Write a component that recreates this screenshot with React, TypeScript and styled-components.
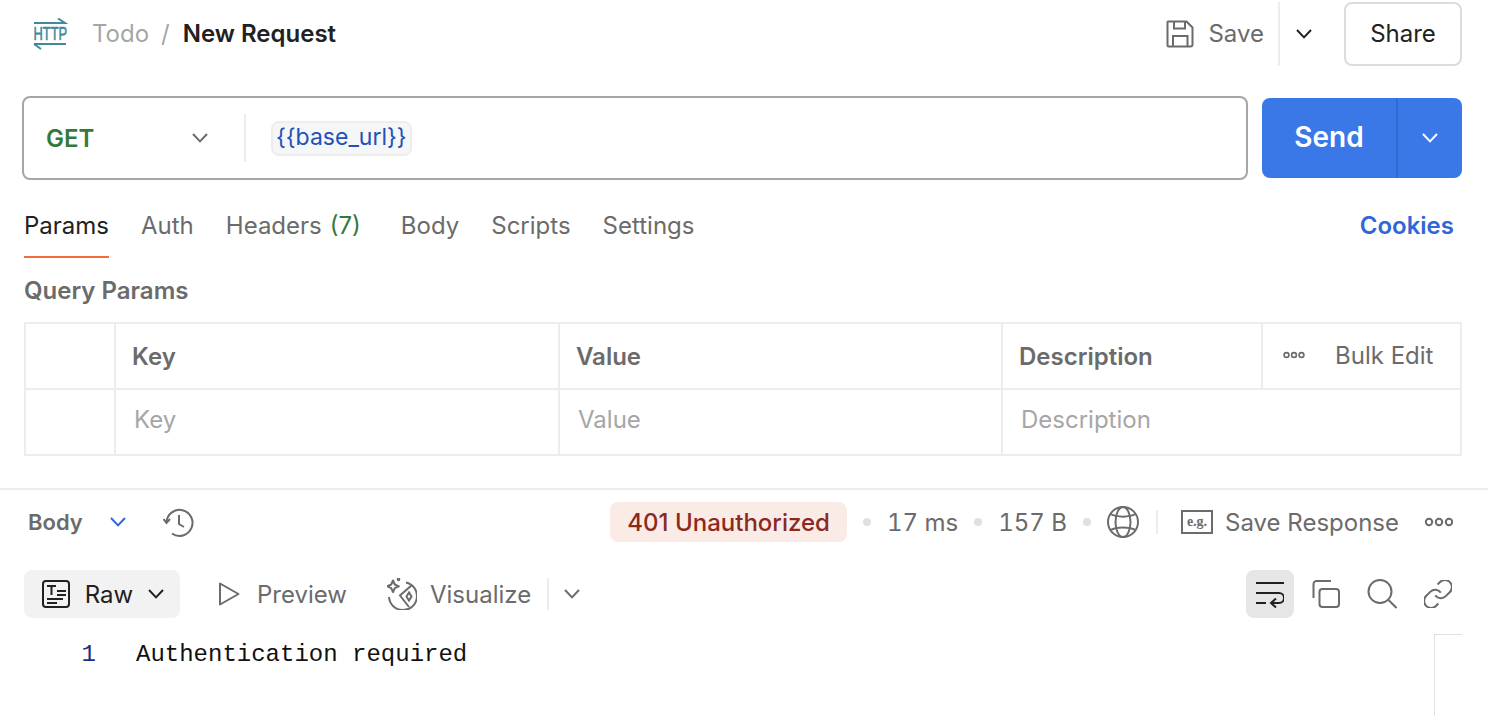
import React from "react";
import styled, { createGlobalStyle } from "styled-components";

const GlobalStyle = createGlobalStyle`
  html, body { margin: 0; padding: 0; background: #fff; }
  body { font-family: Inter, "Liberation Sans", sans-serif; color: #212121; overflow: hidden; }
`;

const Page = styled.div`
  width: 1488px;
  height: 716px;
  display: flex;
  flex-direction: column;
  overflow: hidden;
`;

const Header = styled.div`
  height: 64px;
  margin-top: 2px;
  padding: 0 26px 0 32px;
  display: flex;
  align-items: center;
`;

const Crumbs = styled.div`
  display: flex;
  align-items: center;
  margin-left: 24px;
  padding-bottom: 1px;
  font-size: 24px;
  flex: 1;
`;

const CrumbParent = styled.span`
  color: #a6a6a6;
`;

const CrumbSlash = styled.span`
  color: #a6a6a6;
  margin: 0 13px 0 12px;
`;

const CrumbName = styled.span`
  font-weight: 600;
  color: #212121;
`;

const SaveText = styled.span`
  font-size: 24px;
  color: #6b6b6b;
  margin-left: 14px;
  margin-right: 14px;
  padding-bottom: 1px;
`;

const VerticalRule = styled.div<{ $h: number }>`
  width: 2px;
  height: ${(p) => p.$h}px;
  background: #ededed;
  flex: none;
`;

const SaveChevron = styled.div`
  display: flex;
  margin-left: 16px;
  margin-right: 32px;
`;

const ShareButton = styled.div`
  width: 118px;
  height: 64px;
  box-sizing: border-box;
  border: 2px solid #dcdcdc;
  border-radius: 8px;
  padding-bottom: 1px;
  display: flex;
  align-items: center;
  justify-content: center;
  font-size: 24px;
  color: #212121;
`;

const UrlRow = styled.div`
  margin-top: 30px;
  padding: 0 26px 0 22px;
  display: flex;
  align-items: center;
  gap: 14px;
`;

const UrlBar = styled.div`
  flex: 1;
  height: 84px;
  box-sizing: border-box;
  border: 2px solid #a6a6a6;
  border-radius: 8px;
  display: flex;
  align-items: center;
`;

const Method = styled.div`
  width: 220px;
  box-sizing: border-box;
  padding: 0 36px 0 22px;
  display: flex;
  align-items: center;
  justify-content: space-between;
  font-size: 24px;
  font-weight: 600;
  color: #35793a;
`;

const VarChip = styled.span`
  margin-left: 25px;
  height: 35px;
  box-sizing: border-box;
  padding: 0 3px 2px;
  display: flex;
  align-items: center;
  background: #f5f6f8;
  border: 2px solid #ededed;
  border-radius: 8px;
  font-size: 23px;
  color: #2251b5;
`;

const SendButton = styled.div`
  width: 200px;
  height: 80px;
  border-radius: 8px;
  background: #3b78e7;
  display: flex;
  color: #fff;
`;

const SendLabel = styled.div`
  width: 134px;
  padding-bottom: 2px;
  display: flex;
  align-items: center;
  justify-content: center;
  font-size: 28px;
  font-weight: 600;
  border-right: 2px solid #336bd0;
`;

const SendChevron = styled.div`
  flex: 1;
  display: flex;
  align-items: center;
  justify-content: center;
`;

const TabRow = styled.div`
  margin-top: 16px;
  height: 62px;
  padding: 0 34px 0 24px;
  display: flex;
  gap: 32px;
`;

const Tab = styled.div<{ $active?: boolean }>`
  height: 62px;
  box-sizing: border-box;
  padding-top: 14px;
  font-size: 24px;
  line-height: 32px;
  color: ${(p) => (p.$active ? "#212121" : "#6b6b6b")};
  border-bottom: 2px solid ${(p) => (p.$active ? "#f26b3a" : "transparent")};
`;

const TabCount = styled.span`
  color: #35793a;
  margin-left: 8px;
  margin-right: 8px;
`;

const CookiesLink = styled.div`
  margin-left: auto;
  padding-top: 14px;
  font-size: 24px;
  line-height: 32px;
  font-weight: 600;
  color: #2f66d8;
`;

const SectionTitle = styled.div`
  margin-top: 18px;
  padding-left: 24px;
  font-size: 24px;
  line-height: 30px;
  font-weight: 600;
  color: #6b6b6b;
`;

const ParamsTable = styled.div`
  margin: 16px 26px 0 24px;
  height: 134px;
  box-sizing: border-box;
  border: 2px solid #ededed;
  display: grid;
  grid-template-columns: 88px 444px 443px 260px 1fr;
  grid-template-rows: 66px 64px;
`;

const Cell = styled.div<{ $head?: boolean; $span?: number; $first?: boolean }>`
  box-sizing: border-box;
  display: flex;
  align-items: center;
  padding-left: ${(p) => (p.$head ? 16 : 18)}px;
  padding-bottom: ${(p) => (p.$head ? 0 : 6)}px;
  grid-column: span ${(p) => p.$span ?? 1};
  border-left: ${(p) => (p.$first ? "none" : "2px solid #ededed")};
  border-bottom: ${(p) => (p.$head ? "2px solid #ededed" : "none")};
  font-size: 24px;
  font-weight: ${(p) => (p.$head ? 600 : 400)};
  color: ${(p) => (p.$head ? "#6b6b6b" : "#a6a6a6")};
`;

const BulkCell = styled(Cell)`
  padding-left: 20px;
  padding-bottom: 2px;
  gap: 30px;
  font-weight: 400;
`;

const ResponseBar = styled.div`
  margin-top: 32px;
  height: 66px;
  box-sizing: border-box;
  border-top: 2px solid #ededed;
  padding: 0 35px 0 28px;
  display: flex;
  align-items: center;
`;

const BodyLabel = styled.span`
  font-size: 22px;
  font-weight: 600;
  color: #6b6b6b;
`;

const BodyChevron = styled.div`
  display: flex;
  margin-left: 27px;
  margin-right: 37px;
`;

const StatusBadge = styled.div`
  margin-left: auto;
  height: 40px;
  padding: 0 17px;
  border-radius: 8px;
  background: #fbebe7;
  color: #8b2a1c;
  font-size: 24px;
  font-weight: 500;
  display: flex;
  align-items: center;
`;

const Dot = styled.span`
  width: 8px;
  height: 8px;
  border-radius: 50%;
  background: #e0e0e0;
  margin: 0 16px;
  flex: none;
`;

const Meta = styled.span`
  font-size: 24px;
  color: #6b6b6b;
  font-variant-numeric: tabular-nums;
`;

const ResponseAction = styled.span`
  font-size: 24px;
  color: #6b6b6b;
  margin-left: 12px;
  margin-right: 26px;
`;

const ToolRow = styled.div`
  margin-top: 16px;
  height: 48px;
  padding: 0 36px 0 24px;
  display: flex;
  align-items: center;
`;

const RawPill = styled.div`
  width: 156px;
  height: 48px;
  box-sizing: border-box;
  padding: 0 16px 0 18px;
  border-radius: 8px;
  background: #f2f2f2;
  display: flex;
  align-items: center;
  font-size: 24px;
  color: #212121;
  justify-content: space-between;
`;

const ToolItem = styled.div<{ $gap: number; $left: number }>`
  display: flex;
  align-items: center;
  gap: ${(p) => p.$gap}px;
  margin-left: ${(p) => p.$left}px;
  font-size: 24px;
  color: #6b6b6b;
`;

const ToolIcons = styled.div`
  margin-left: auto;
  display: flex;
  align-items: center;
`;

const WrapButton = styled.div`
  width: 48px;
  height: 48px;
  border-radius: 8px;
  background: #e6e6e6;
  display: flex;
  align-items: center;
  justify-content: center;
`;

const CodeArea = styled.div`
  margin-top: 16px;
  flex: 1;
  padding-right: 26px;
  display: flex;
  font-family: "Liberation Mono", monospace;
  font-size: 24px;
`;

const LineNumber = styled.div`
  width: 96px;
  padding-top: 2px;
  text-align: right;
  line-height: 38px;
  color: #1c2f7f;
`;

const CodeText = styled.div`
  flex: 1;
  margin-left: 40px;
  padding-top: 2px;
  line-height: 38px;
  color: #111;
`;

const Minimap = styled.div`
  width: 28px;
  box-sizing: border-box;
  border-left: 1px solid #e0e0e0;
  border-top: 1px solid #e0e0e0;
`;

const IconSlot = styled.div<{ $left: number }>`
  display: flex;
  margin-left: ${(p) => p.$left}px;
`;

const Chevron = ({ size = 16, color = "#212121", w = 2 }: { size?: number; color?: string; w?: number }) => (
  <svg width={size} height={size * 0.6} viewBox="0 0 16 9.6" fill="none">
    <path d="M1 1l7 7.4L15 1" stroke={color} strokeWidth={w} />
  </svg>
);

const HttpLogo = () => (
  <svg width="36" height="32" viewBox="0 0 36 32" fill="none" style={{ flex: "none" }}>
    <path d="M2 5h31L26 .5M2 26h32M2 26l7 5" stroke="#43899b" strokeWidth="2" />
    <text transform="translate(1.500 22) scale(.68 1)" fontFamily="Liberation Sans" fontSize="19" fill="#43899b" stroke="#43899b" strokeWidth=".6">HTTP</text>
  </svg>
);

const SaveIcon = () => (
  <svg width="28" height="28" viewBox="0 0 28 28" fill="none" stroke="#6b6b6b" strokeWidth="2" style={{ flex: "none" }}>
    <path d="M2 1.500h18.500l6 6v17a2 2 0 0 1-2 2H2.500a1 1 0 0 1-1-1V2a.5.5 0 0 1 .5-.5z" strokeLinejoin="round" />
    <path d="M8 1.500v7h11v-7M7 26.500V16h14.500v10.500" />
  </svg>
);

const HistoryIcon = () => (
  <svg width="32" height="30" viewBox="0 0 32 30" fill="none" stroke="#6b6b6b" strokeWidth="2">
    <path d="M3.500 15.500A13 13 0 1 1 9 26.500" />
    <path d="M.5 12l3 4 3.500-4M16 8v9l5 3" />
  </svg>
);

const GlobeIcon = () => (
  <svg width="32" height="32" viewBox="0 0 32 32" fill="none" stroke="#6b6b6b" strokeWidth="2" style={{ flex: "none" }}>
    <circle cx="16" cy="16" r="15" />
    <ellipse cx="16" cy="16" rx="7.500" ry="15" />
    <path d="M3.500 8c6 3.500 19 3.500 25 0M3.500 24c6-3.500 19-3.500 25 0" />
  </svg>
);

const ExampleIcon = () => (
  <svg width="32" height="24" viewBox="0 0 32 24" fill="none" style={{ flex: "none" }}>
    <rect x="1" y="1" width="30" height="22" fill="none" stroke="#6b6b6b" strokeWidth="2" />
    <text x="16" y="16" textAnchor="middle" fontFamily="Liberation Serif" fontWeight="700" fontSize="14" fill="#6b6b6b">e.g.</text>
  </svg>
);

const MoreDots = ({ r = 3.2 }: { r?: number }) => (
  <svg width="28" height="10" viewBox="0 0 28 10" fill="none" stroke="#6b6b6b" strokeWidth="2" style={{ flex: "none" }}>
    <circle cx="4" cy="5" r={r} />
    <circle cx="14" cy="5" r={r} />
    <circle cx="24" cy="5" r={r} />
  </svg>
);

const SmallDots = () => (
  <svg width="22" height="8" viewBox="0 0 22 8" fill="none" stroke="#6b6b6b" strokeWidth="1.600">
    <circle cx="3.500" cy="4" r="2.400" />
    <circle cx="11" cy="4" r="2.400" />
    <circle cx="18.500" cy="4" r="2.400" />
  </svg>
);

const RawIcon = () => (
  <svg width="28" height="28" viewBox="0 0 28 28" fill="none" stroke="#212121" strokeWidth="2">
    <rect x="1" y="1" width="26" height="26" rx="3" />
    <path d="M5 6h9M9.500 6v9M15 11h9M15 15h9M5 19h16M5 23h10" />
  </svg>
);

const PlayIcon = () => (
  <svg width="22" height="24" viewBox="0 0 22 24" fill="none" stroke="#6b6b6b" strokeWidth="2">
    <path d="M2 1.500v21L20.500 12z" strokeLinejoin="round" />
  </svg>
);

const VisualizeIcon = () => (
  <svg width="30" height="32" viewBox="0 0 30 32" fill="none" stroke="#6b6b6b" strokeWidth="2">
    <path d="M19 4.400A14 14 0 1 1 2 19" />
    <path d="M25 7L13 17.500 22 29M22 14.500l-2.500 4 2.500 4 2.500-4z" />
    <path d="M6 2.500l1.800 4 4 1.800-4 1.800-1.800 4-1.800-4-4-1.800 4-1.800z" strokeLinejoin="round" />
    <circle cx="11.500" cy="1.500" r=".8" />
  </svg>
);

const WrapIcon = () => (
  <svg width="28" height="28" viewBox="0 0 28 28" fill="none" stroke="#212121" strokeWidth="2">
    <path d="M0 3h28M0 13h23a5 5 0 0 1 0 10h-8M0 23h10M20 18.500L15 23l5 4.500" />
  </svg>
);

const CopyIcon = () => (
  <svg width="28" height="28" viewBox="0 0 28 28" fill="none" stroke="#6b6b6b" strokeWidth="2">
    <rect x="7.500" y="9" width="19.500" height="18" rx="3" />
    <path d="M1.500 18V4a3 3 0 0 1 3-3H19" />
  </svg>
);

const SearchIcon = () => (
  <svg width="30" height="30" viewBox="0 0 30 30" fill="none" stroke="#6b6b6b" strokeWidth="2">
    <circle cx="13" cy="12.500" r="11.500" />
    <path d="M21.500 21L29.500 29" />
  </svg>
);

const LinkIcon = () => (
  <svg width="28" height="28" viewBox="2 2 20 20" fill="none" stroke="#6b6b6b" strokeWidth="1.450">
    <path d="M10 13a5 5 0 0 0 7.540.54l3-3a5 5 0 0 0-7.070-7.070l-1.720 1.710" />
    <path d="M14 11a5 5 0 0 0-7.540-.54l-3 3a5 5 0 0 0 7.070 7.070l1.710-1.710" />
  </svg>
);

const App = () => {
  return (
    <Page>
      <GlobalStyle />
      <Header>
        <HttpLogo />
        <Crumbs>
          <CrumbParent>Todo</CrumbParent>
          <CrumbSlash>/</CrumbSlash>
          <CrumbName>New Request</CrumbName>
        </Crumbs>
        <SaveIcon />
        <SaveText>Save</SaveText>
        <VerticalRule $h={64} />
        <SaveChevron><Chevron /></SaveChevron>
        <ShareButton>Share</ShareButton>
      </Header>

      <UrlRow>
        <UrlBar>
          <Method>
            GET
            <Chevron color="#6b6b6b" />
          </Method>
          <VerticalRule $h={48} />
          <VarChip>{"{{base_url}}"}</VarChip>
        </UrlBar>
        <SendButton>
          <SendLabel>Send</SendLabel>
          <SendChevron><Chevron color="#fff" /></SendChevron>
        </SendButton>
      </UrlRow>

      <TabRow>
        <Tab $active>Params</Tab>
        <Tab>Auth</Tab>
        <Tab>Headers<TabCount>(7)</TabCount></Tab>
        <Tab>Body</Tab>
        <Tab>Scripts</Tab>
        <Tab>Settings</Tab>
        <CookiesLink>Cookies</CookiesLink>
      </TabRow>

      <SectionTitle>Query Params</SectionTitle>

      <ParamsTable>
        <Cell $head $first />
        <Cell $head>Key</Cell>
        <Cell $head>Value</Cell>
        <Cell $head>Description</Cell>
        <BulkCell $head>
          <SmallDots />
          Bulk Edit
        </BulkCell>
        <Cell $first />
        <Cell>Key</Cell>
        <Cell>Value</Cell>
        <Cell $span={2}>Description</Cell>
      </ParamsTable>

      <ResponseBar>
        <BodyLabel>Body</BodyLabel>
        <BodyChevron><Chevron color="#2f66d8" /></BodyChevron>
        <HistoryIcon />
        <StatusBadge>401 Unauthorized</StatusBadge>
        <Dot />
        <Meta>17 ms</Meta>
        <Dot />
        <Meta>157 B</Meta>
        <Dot />
        <GlobeIcon />
        <IconSlot $left={17}><VerticalRule $h={24} /></IconSlot>
        <IconSlot $left={23}><ExampleIcon /></IconSlot>
        <ResponseAction>Save Response</ResponseAction>
        <MoreDots />
      </ResponseBar>

      <ToolRow>
        <RawPill>
          <RawIcon />
          Raw
          <Chevron />
        </RawPill>
        <ToolItem $gap={17} $left={38}>
          <PlayIcon />
          Preview
        </ToolItem>
        <ToolItem $gap={13} $left={40}>
          <VisualizeIcon />
          Visualize
        </ToolItem>
        <IconSlot $left={16}><VerticalRule $h={32} /></IconSlot>
        <IconSlot $left={15}><Chevron color="#6b6b6b" /></IconSlot>
        <ToolIcons>
          <WrapButton><WrapIcon /></WrapButton>
          <IconSlot $left={18}><CopyIcon /></IconSlot>
          <IconSlot $left={27}><SearchIcon /></IconSlot>
          <IconSlot $left={27}><LinkIcon /></IconSlot>
        </ToolIcons>
      </ToolRow>

      <CodeArea>
        <LineNumber>1</LineNumber>
        <CodeText>Authentication required</CodeText>
        <Minimap />
      </CodeArea>
    </Page>
  );
};

export default App;
